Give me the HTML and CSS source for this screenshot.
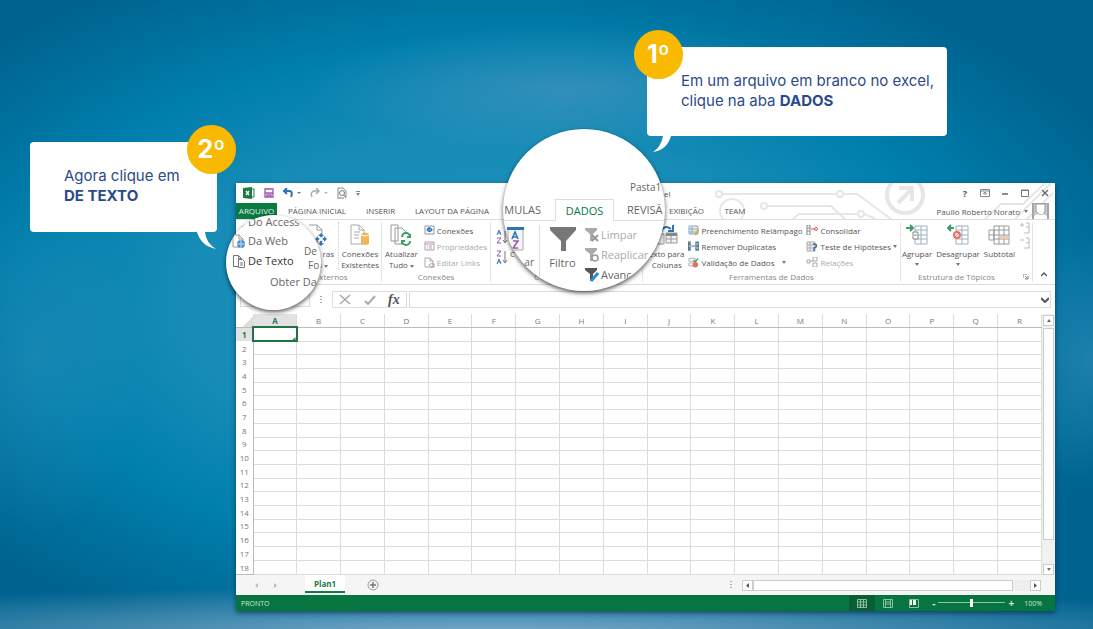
FILE: index.html
```html
<!DOCTYPE html>
<html lang="pt-BR">
<head>
<meta charset="utf-8">
<title>Importar dados de texto no Excel</title>
<link rel="stylesheet" href="styles.css">
</head>
<body>
<svg class="defs" aria-hidden="true">
  <symbol id="funnel" viewBox="0 0 26 26"><path d="M0 1h26v3L16 15v10h-5V15L0 4z"/></symbol>
  <symbol id="down" viewBox="0 0 4 3"><path d="M0 0h4L2 3z" fill="#777"/></symbol>
</svg>
<main class="stage">
  <section class="window">
    <svg class="circuit" viewBox="0 0 340 36" fill="none" stroke="#e6e6e6" stroke-width="2" aria-hidden="true">
      <circle cx="4" cy="11" r="3"/><path d="M7 11h115M128 11h14l34 25"/><circle cx="125" cy="11" r="3"/>
      <circle cx="17" cy="28" r="12"/><circle cx="49" cy="23" r="3"/><path d="M52 23h64l14 13M78 36l6-5h58M149 31l12 5"/><circle cx="146" cy="31" r="3"/>
      <circle cx="190" cy="12" r="18" stroke-width="4"/><path d="M183 20l14-14M184 5h13v13" stroke-width="4"/>
      <path d="M270 36l16-15h22l22-21M300 36l36-36M312 36l26-26"/>
    </svg>
    <header class="titlebar">
      <div class="quick">
        <svg width="12" height="12" viewBox="0 0 12 12"><path d="M7 2h4v8H7" fill="#fff" stroke="#1b7d45"/><path fill="#1b7d45" d="M0 1l9-1v12l-9-1z"/><path d="M3 4l3 4M6 4L3 8" stroke="#fff" stroke-width="1.3"/></svg>
        <svg width="10" height="10" viewBox="0 0 10 10"><path d="M1 1h8v8H1zM1 5h8M3 9V7h4v2" fill="#fff" stroke="#9b55ab" stroke-width="1.3"/></svg>
        <svg width="18" height="10" viewBox="0 0 18 10"><path d="M1 3h6q3 1 1 6M4 0L1 3l3 3" fill="none" stroke="#2e74b5" stroke-width="2"/><path d="M14 4h4l-2 2z" fill="#777"/></svg>
        <svg width="18" height="10" viewBox="0 0 18 10"><path d="M9 3H4q-4 1-2 6M6 0l3 3-3 3" fill="none" stroke="#aaa" stroke-width="1.5"/><path d="M14 4h4l-2 2z" fill="#bbb"/></svg>
        <svg width="10" height="12" viewBox="0 0 10 12"><path d="M1 10V1h5l3 3v6" fill="none" stroke="#888"/><circle cx="5" cy="6" r="2.5" fill="#fff" stroke="#777"/><path d="M7 8l2 3M0 11h7" stroke="#777"/></svg>
        <svg width="4" height="5" viewBox="0 0 4 5"><path d="M0 0h4v1H0zM0 2h4L2 5z" fill="#888"/></svg>
      </div>
      <span class="doc">el</span>
      <div class="controls">
        <button aria-label="Ajuda">?</button>
        <button aria-label="Opções da faixa"><svg width="10" height="8" viewBox="0 0 10 8"><path d="M.5.500h9v7h-9zM0 2h10M5 6V3M3 5l2-2 2 2" fill="none" stroke="#888"/></svg></button>
        <button aria-label="Minimizar"><svg width="8" height="8" viewBox="0 0 8 8"><path d="M1 5h6" stroke="#666" stroke-width="1.5"/></svg></button>
        <button aria-label="Maximizar"><svg width="8" height="8" viewBox="0 0 8 8"><path d="M.5 1h7v6.500h-7zM0 1.500h8" fill="none" stroke="#777"/></svg></button>
        <button aria-label="Fechar"><svg width="8" height="8" viewBox="0 0 8 8"><path d="M1 1l6 6M7 1L1 7" stroke="#666" stroke-width="1.4"/></svg></button>
      </div>
    </header>
    <nav class="tabs">
      <button class="file">ARQUIVO</button><button>PÁGINA INICIAL</button><button>INSERIR</button><button>LAYOUT DA PÁGINA</button><span></span><button>EXIBIÇÃO</button><button>TEAM</button>
      <div class="user"><span>Paullo Roberto Norato</span><svg width="4" height="3"><use href="#down"/></svg>
        <svg width="17" height="16" viewBox="0 0 17 16"><path d="M0 0h17v16H0z" fill="#a5a5a5"/><path d="M2 1h13v15H2z" fill="#ccc"/><path d="M4 1h9v7q-1 4-4 4t-5-4z" fill="#fff" stroke="#999"/><path d="M2 16v-3l4-2q3 2 5 0l4 2v3z" fill="#fff"/></svg></div>
    </nav>
    <section class="ribbon">
      <div class="group">
        <div class="tools end">
          <button class="big cut"><svg width="20" height="22" viewBox="0 0 20 22"><path d="M1 1h8l5 5v12H1M9 1v5h5" fill="#fff" stroke="#999"/><path d="M13 11v9M8 15h10" stroke="#3677b5" stroke-width="2"/><path d="M13 9l-3 3h6zM13 22l-3-3h6zM7 15l3-3v6zM19 15l-3-3v6z" fill="#3677b5"/><circle cx="13" cy="15" r="2" fill="#fff"/></svg><span>ras</span><span>s <svg width="4" height="3"><use href="#down"/></svg></span></button>
          <button class="big rule"><svg width="20" height="22" viewBox="0 0 20 22"><path d="M1 1h8l5 5v14H1zM9 1v5h5M4 8h6M4 11h5M4 14h5" fill="#fff" stroke="#aaa"/><path d="M11 10q4-3 8 0v10q-4 2-8 0z" fill="#f2b65a"/><path d="M11 11q4 2 8 0" stroke="#fff" fill="none"/></svg><span>Conexões</span><span>Existentes</span></button>
        </div>
        <div class="label externos">xternos</div>
      </div>
      <div class="group">
        <div class="tools">
          <button class="big"><svg width="22" height="22" viewBox="0 0 22 22"><path d="M1 1h7v16H1zM5 4h7l4 4v12H5z" fill="#fff" stroke="#999"/><circle cx="16" cy="15" r="6" fill="#fff"/><path d="M20 13a4 4 0 0 0-8 0M12 17a4 4 0 0 0 8 0M20 10v3h-3M12 20v-3h3" fill="none" stroke="#3c9c68" stroke-width="2"/></svg><span>Atualizar</span><span>Tudo <svg width="4" height="3"><use href="#down"/></svg></span></button>
          <div class="list">
            <button><svg width="11" height="10" viewBox="0 0 11 10"><path d="M1 1h9v8H1z" fill="#fff" stroke="#89a"/><path d="M3 5q2-4 5 0-3 3-5 0M5 7V2" stroke="#2e74b5" fill="none" stroke-width="1.3"/></svg>Conexões</button>
            <button class="off"><svg width="11" height="10" viewBox="0 0 11 10"><path d="M1 1h9v8H1zM1 3h9M3 5h1M5 5h3M3 7h1M5 7h3" fill="#fff" stroke="#b59bb2"/></svg>Propriedades</button>
            <button class="off"><svg width="11" height="11" viewBox="0 0 11 11"><path d="M1 1h5l3 3v6H1zM6 1v3h3" fill="#fff" stroke="#aaa"/><path d="M5 9q0-3 5-2v3H6" fill="none" stroke="#b58cae"/></svg>Editar Links</button>
          </div>
        </div>
        <div class="label">Conexões</div>
      </div>
      <div class="group">
        <div class="tools sort">
          <svg width="12" height="34" viewBox="0 0 12 34"><g fill="none" stroke="#3677b5"><path d="M1 5l2-5 2 5M2 3h3M1 34l2-5 2 5M2 32h3"/><path d="M1 8h4l-4 5h4M1 21h4l-4 5h4" stroke="#9b55ab"/><path d="M9 1v12M7 10l2 3 2-3M9 21v12M7 30l2 3 2-3" stroke="#777"/></g></svg>
          <button class="big low"><span>C</span></button>
        </div>
        <div class="label classify">C</div>
      </div>
      <div class="group">
        <div class="tools data">
          <button class="big"><svg width="24" height="22" viewBox="0 0 24 22"><path d="M2 10h7v10H2zM11 9h11v10H11zM11 15h11M16 9v10" fill="#eef3f8" stroke="#999"/><path d="M11 9h11v3H11z" fill="#888"/><path d="M6 8q3-8 10-3M13 7h5V1" fill="none" stroke="#2e74b5" stroke-width="2"/></svg><span>exto para</span><span>Colunas</span></button>
          <div class="list wide">
            <button><svg width="11" height="11" viewBox="0 0 11 11"><path d="M1 1h9v8H1zM1 4h9M1 7h9M4 1v8" fill="#e7f1ea" stroke="#8aa8bb"/><path d="M7 10l4-6" stroke="#d8ac45" stroke-width="2"/></svg>Preenchimento Relâmpago</button>
            <button><svg width="11" height="11" viewBox="0 0 12 11"><path d="M0 0h3v10H0zM8 0h4v10H8z" fill="#678"/><path d="M1 4h2v2H1zM9 2h2v2H9zM9 6h2v2H9z" fill="#8cf"/><path d="M3 5h5" stroke="#2e74b5"/></svg>Remover Duplicatas</button>
            <button><svg width="11" height="11" viewBox="0 0 12 11"><path d="M1 1h7v3H1zM1 6h7v3H1z" fill="#fff" stroke="#aaa"/><path d="M6 3l2 2 3-4" stroke="#3c9c68" stroke-width="1.5" fill="none"/><circle cx="8" cy="8" r="3" fill="#e8705a"/></svg>Validação de Dados <svg class="far" width="4" height="3"><use href="#down"/></svg></button>
          </div>
          <div class="list">
            <button><svg width="12" height="10" viewBox="0 0 12 10"><path d="M1 0h3v10H1zM1 3h3M1 6h3" fill="#fff" stroke="#888"/><path d="M5 4h5" stroke="#d9534f"/><circle cx="10" cy="4" r="1.5" fill="#fff" stroke="#d9534f"/></svg>Consolidar</button>
            <button><svg width="12" height="11" viewBox="0 0 12 11"><path d="M1 1h8v9H1zM1 4h8M1 7h8M4 1v9" fill="#fbeee6" stroke="#aaa"/><path d="M7 3q5 0 3 3l-2 1v3" fill="none" stroke="#2e74b5" stroke-width="1.5"/></svg>Teste de Hipóteses <svg width="4" height="3"><use href="#down"/></svg></button>
            <button class="off"><svg width="12" height="10" viewBox="0 0 12 10"><path d="M1 3h3v3H1zM7 0h4v4H7zM7 6h4v4H7zM4 4h3" fill="#fff" stroke="#aaa"/></svg>Relações</button>
          </div>
        </div>
        <div class="label">Ferramentas de Dados</div>
      </div>
      <div class="group">
        <div class="tools outline">
          <button class="big"><svg width="22" height="22" viewBox="0 0 22 22"><path d="M9 2h12v18H9zM9 6h12M9 11h12M9 15h12M15 2v18" fill="#fff" stroke="#9db0c2"/><path d="M7 8h5v7H7zM8 11h3" fill="#fff" stroke="#888"/><path d="M0 4h6M4 1l3 3-3 3" stroke="#3c9c68" fill="none" stroke-width="2"/></svg><span>Agrupar</span><svg width="4" height="3"><use href="#down"/></svg></button>
          <button class="big"><svg width="22" height="22" viewBox="0 0 22 22"><path d="M9 2h12v18H9zM9 6h12M9 11h12M9 15h12M15 2v18" fill="#fff" stroke="#9db0c2"/><circle cx="10" cy="11" r="3" fill="#fff" stroke="#e8705a" stroke-width="2"/><path d="M8 13l4-4" stroke="#e8705a"/><path d="M1 4h6M4 1L1 4l3 3" stroke="#3c9c68" fill="none" stroke-width="2"/></svg><span>Desagrupar</span><svg width="4" height="3"><use href="#down"/></svg></button>
          <button class="big"><svg width="22" height="22" viewBox="0 0 22 22"><path d="M6 2h15v18H6zM6 6h15M6 11h15M6 15h15M11 2v18M16 2v18M1 6h5v10H1zM1 11h5" fill="#fff" stroke="#999"/><path d="M12 12h9v3h-9z" fill="#f2c7b3"/></svg><span>Subtotal</span></button>
          <svg width="12" height="28" viewBox="0 0 12 28" fill="none" stroke="#bbb"><path d="M1 3h4M3 1v4M7 1h3v10H5M7 5h3M1 18h4M7 16h3v10H5M7 21h3"/></svg>
        </div>
        <div class="label corner">Estrutura de Tópicos <svg width="6" height="6" viewBox="0 0 6 6"><path d="M0 4V0h4M2 2l3 3M5 2v3H2" fill="none" stroke="#888"/></svg></div>
      </div>
      <button class="collapse" aria-label="Recolher"><svg width="6" height="5" viewBox="0 0 6 5"><path d="M0 4l3-3 3 3" fill="none" stroke="#555" stroke-width="1.4"/></svg></button>
    </section>
    <section class="formula">
      <input class="namebox" aria-label="Caixa de nome">
      <svg width="2" height="8" viewBox="0 0 2 8"><path d="M0 0h2v1H0zM0 3h2v1H0zM0 6h2v1H0z" fill="#aaa"/></svg>
      <div class="fx">
        <svg width="12" height="11" viewBox="0 0 12 11"><path d="M1 1l10 9M11 1L1 10" stroke="#aaa" stroke-width="1.6"/></svg>
        <svg width="12" height="10" viewBox="0 0 12 10"><path d="M1 6l3 3 7-8" fill="none" stroke="#aaa" stroke-width="2"/></svg>
        <i>fx</i>
      </div>
      <div class="entry"><input aria-label="Fórmula"><svg width="8" height="6" viewBox="0 0 8 6"><path d="M0 1l4 4 4-4" fill="none" stroke="#555" stroke-width="2"/></svg></div>
    </section>
    <section class="sheet">
      <table id="cells"></table>
      <div class="vscroll"><span class="arrow"><svg width="4" height="3" viewBox="0 0 4 3"><path d="M0 3h4L2 0z" fill="#666"/></svg></span><span class="thumb"></span><span class="arrow"><svg width="4" height="3"><use href="#down"/></svg></span></div>
    </section>
    <section class="sheetbar">
      <svg width="24" height="5" viewBox="0 0 24 5"><path d="M4 0L1 2.500l3 2.500zM20 0l3 2.500-3 2.500z" fill="#bbb"/></svg>
      <button class="plan">Plan1</button>
      <button class="add" aria-label="Nova planilha"><svg width="12" height="12" viewBox="0 0 12 12"><circle cx="6" cy="6" r="5" fill="none" stroke="#999"/><path d="M6 3v6M3 6h6" stroke="#777" stroke-width="1.5"/></svg></button>
      <svg class="split" width="2" height="8" viewBox="0 0 2 8"><path d="M0 0h2v1H0zM0 3h2v1H0zM0 6h2v1H0z" fill="#aaa"/></svg>
      <div class="hscroll"><span class="arrow"><svg width="4" height="5" viewBox="0 0 4 5"><path d="M4 0v5L1 2.500z" fill="#555"/></svg></span><span class="thumb"></span><span class="arrow"><svg width="4" height="5" viewBox="0 0 4 5"><path d="M0 0v5l3-2.500z" fill="#555"/></svg></span></div>
    </section>
    <footer class="status">
      <span>PRONTO</span>
      <div class="views">
        <button class="on" aria-label="Normal"><svg width="10" height="9" viewBox="0 0 10 9"><path d="M.5.500h9v8h-9zM0 3h10M0 6h10M3.500 0v9M6.500 0v9" fill="none" stroke="#8cc0a2"/></svg></button>
        <button aria-label="Layout da página"><svg width="10" height="9" viewBox="0 0 10 9"><path d="M.5.500h9v8h-9zM2.500 0v9M7.500 0v9M3 3h4M3 5h4" fill="none" stroke="#8cc0a2"/></svg></button>
        <button aria-label="Quebra de página"><svg width="10" height="9" viewBox="0 0 10 9"><path d="M.5.500h9v8h-9z" fill="none" stroke="#8cc0a2"/><path d="M1 1h2v5H1zM4 1h3v5H4z" fill="#fff"/></svg></button>
      </div>
      <div class="zoom"><span>-</span><svg width="67" height="8" viewBox="0 0 67 8"><path d="M0 3.500h67" stroke="#8fc4a5"/><path d="M32 0h3v8h-3z" fill="#fff"/></svg><span>+</span></div>
      <span>100%</span>
    </footer>
  </section>

  <section class="lens source">
    <div><svg width="10" height="11" viewBox="0 0 10 11"><path d="M3 7l4-2v5H3z" fill="#c94a4a"/></svg>Do Access</div>
    <div><svg width="14" height="14" viewBox="0 0 14 14"><path d="M1 1h6l4 4v8H1zM7 1v4h4" fill="#fff" stroke="#999"/><circle cx="9" cy="10" r="4" fill="#4f90c5"/><path d="M5 10h8M9 6v8" stroke="#bfe0f5"/></svg>Da Web</div>
    <div class="sharp"><svg width="14" height="14" viewBox="0 0 14 14"><path d="M6 12.500H1.500v-11h5l3 3M6.500 1.500v3h3" fill="#fff" stroke="#777"/><path d="M6.500 5.500h4l2 2v6h-6zM8 9h3M8 11h3" fill="#fff" stroke="#777"/></svg>De Texto</div>
    <p>Obter Dad</p>
    <div class="others"><span>De</span><span>Fo</span></div>
  </section>

  <section class="lens data-tab">
    <div class="book">Pasta1</div>
    <div class="lens-tabs"><span class="left">MULAS</span><button>DADOS</button><span class="right">REVISÃ</span></div>
    <div class="lens-ribbon">
      <div class="az"><svg width="18" height="24" viewBox="0 0 18 24"><path d="M1 1h15v22H1z" fill="#f5f5f5" stroke="#aaa"/><path d="M0 0h17v3H0z" fill="#2e74b5"/><path d="M5 12l3-7 3 7M6 10h4" fill="none" stroke="#2e74b5" stroke-width="1.5"/><path d="M6 14h5l-5 7h5" fill="none" stroke="#9b55ab" stroke-width="1.5"/></svg><span>ar</span></div>
      <div class="filter"><svg width="26" height="26" fill="#777"><use href="#funnel"/></svg><span>Filtro</span></div>
      <div class="filters">
        <span class="dim"><svg width="14" height="14" viewBox="0 0 14 14"><path d="M0 0h12v2L8 6v7H5V6L0 2z" fill="#aaa"/><path d="M7 7l6 6M13 7l-6 6" stroke="#999" stroke-width="2"/></svg>Limpar</span>
        <span class="dim"><svg width="14" height="14" viewBox="0 0 14 14"><path d="M0 0h12v2L8 6v7H5V6L0 2z" fill="#aaa"/><circle cx="10" cy="10" r="3" fill="#fff" stroke="#999" stroke-width="1.500"/></svg>Reaplicar</span>
        <span><svg width="14" height="14" viewBox="0 0 14 14"><path d="M0 0h12v2L8 6v7H5V6L0 2z" fill="#555"/><path d="M6 13l7-8" stroke="#2e8bd5" stroke-width="3"/></svg>Avanç</span>
      </div>
    </div>
  </section>

  <article class="callout first">
    <p>Em um arquivo em branco no excel,<br>clique na aba <b>DADOS</b></p>
    <strong class="badge">1º</strong>
    <svg class="tail" width="20" height="18" viewBox="0 0 20 18"><path d="M11 0q-2 11-10 16Q15 14 19 0z" fill="#fff"/></svg>
  </article>
  <article class="callout second">
    <p>Agora clique em<br><b>DE TEXTO</b></p>
    <strong class="badge">2º</strong>
    <svg class="tail" width="20" height="18" viewBox="0 0 20 18"><path d="M0 0q4 14 19 17Q9 11 8 0z" fill="#fff"/></svg>
  </article>
</main>
<script src="script.js"></script>
</body>
</html>
```

FILE: styles.css
```css
* { box-sizing: border-box; }
body { margin: 0; font-family: "Open Sans", "Noto Sans", sans-serif; font-size: 8px; font-weight: 500; line-height: 11px; color: #555; }
button, input { font: inherit; color: inherit; border: 0; background: none; padding: 0; margin: 0; }
svg { flex: none; }
p { margin: 0; }
.defs { position: absolute; width: 0; height: 0; }

.stage {
  position: relative;
  min-height: 100vh;
  display: flex;
  padding: 183px 38px 18px 236px;
  background:
    radial-gradient(ellipse 75% 8% at 45% 101%, #7fabc9, transparent),
    radial-gradient(ellipse 24% 10% at 52% 14%, rgba(90, 155, 195, .5), transparent),
    radial-gradient(ellipse 10% 28% at 3% 57%, rgba(70, 150, 190, .3), transparent),
    radial-gradient(ellipse 8% 20% at 100% 57%, rgba(50, 140, 185, .6), transparent),
    radial-gradient(ellipse 62% 58% at 45% 48%, #1b90bb 0, #178cb7 45%, #007fad 70%, #006490 100%);
}

.window { position: relative; flex: 1; min-width: 0; display: flex; flex-direction: column; background: #fff; box-shadow: 0 2px 5px rgba(0, 30, 60, .6); }
.circuit { position: absolute; top: 0; right: 0; width: 340px; height: 36px; }
.titlebar, .tabs { position: relative; }

.titlebar { height: 20px; display: flex; align-items: center; padding: 0 5px 0 7px; }
.quick { display: flex; align-items: center; gap: 9px; }
.doc { margin-left: 304px; }
.controls { margin-left: auto; display: flex; }
.controls button { width: 20px; height: 20px; display: grid; place-items: center; font-weight: 700; font-size: 9px; }
.controls button:last-child { width: 11px; margin-left: 4px; }

.tabs { height: 17px; display: grid; grid-template-columns: 41fr 80fr 47fr 96fr 160fr 53fr 44fr 298fr; border-bottom: 1px solid #ddd; }
.tabs button { white-space: nowrap; padding-bottom: 1px; }
.tabs .file { background: #087a42; color: #e5f3ea; }
.user { display: flex; justify-content: flex-end; align-items: center; gap: 4px; padding-right: 6px; }

.ribbon { height: 65px; display: grid; grid-template-columns: 146fr 109fr 152fr 258fr 132fr 22fr; border-bottom: 1px solid #ddd; }
.group { min-width: 0; display: flex; flex-direction: column; justify-content: space-between; margin: 2px 0; border-right: 1px solid #e5e5e5; }
.tools { height: 48px; display: flex; justify-content: center; align-items: flex-start; gap: 6px; }
.tools.end { justify-content: flex-end; gap: 4px; }
.big { flex: none; display: flex; flex-direction: column; align-items: center; white-space: nowrap; }
.big > svg:first-child { margin: 2px 0; }
.big > svg:last-child { margin-top: 4px; }
.big.cut { align-items: flex-end; }
.big.cut svg:first-child { margin-right: 6px; }
.big.rule { border-left: 1px dotted #ccc; padding: 0 2px; }
.big.low { padding-top: 26px; }
.label { text-align: center; white-space: nowrap; color: #888; }
.label.externos { padding-left: 50px; }
.label.classify { text-align: left; padding-left: 43px; }
.list { display: grid; grid-template-rows: repeat(3, 16px); }
.list button { display: flex; align-items: center; gap: 2px; white-space: nowrap; text-align: left; }
.list.wide { width: 116px; }
.list .far { margin-left: 6px; }
.off { color: #aaa; }
.sort { justify-content: flex-start; padding-left: 5px; gap: 2px; }
.sort > svg { margin-top: 8px; }
.data { justify-content: flex-start; padding-left: 6px; gap: 4px; }
.data .wide { margin-right: -2px; }
.outline { gap: 4px; }
.corner svg { margin-left: 26px; }
.corner { text-align: right; padding-right: 3px; }
.collapse { align-self: end; padding: 5px 0; }

.formula { height: 17px; margin: 6px 4px; display: flex; align-items: center; gap: 2px; }
.formula > svg { margin: 0 8px; }
.namebox { width: 70px; height: 15px; border: 1px solid #ddd; }
.fx { width: 75px; height: 17px; display: flex; align-items: center; justify-content: space-around; border: 1px solid #ddd; }
.fx i { font: italic 700 14px "Liberation Serif", serif; }
.entry { flex: 1; height: 17px; display: flex; align-items: center; padding-right: 1px; border: 1px solid #ddd; }
.entry input { flex: 1; min-width: 0; height: 13px; }

.sheet { flex: 1; display: grid; grid-template-columns: 1fr 13px; }
.sheet table { width: 100%; height: 100%; border-collapse: collapse; table-layout: fixed; border-bottom: 1px solid #bbb; }
.sheet th, .sheet td { padding: 0; font-weight: 500; line-height: 11px; color: #777; text-align: center; overflow: hidden; }
.sheet th:first-child { width: 17px; }
.sheet thead th { height: 13px; border-right: 1px solid #ddd; border-bottom: 1px solid #bbb; }
.sheet thead th:first-child { background: linear-gradient(135deg, #fff 65%, #ddd 65%); }
.sheet tbody th { border-right: 1px solid #bbb; }
.sheet td { border: 1px solid #ddd; }
.sheet .hot { background: #e2e2e2; color: #147a47; font-weight: 700; }
.sheet td.active { border: 0; outline: 2px solid #217346; outline-offset: -1px; background: linear-gradient(135deg, #fff 94%, #217346 94%); }
.vscroll { display: flex; flex-direction: column; padding: 1px 1px 0; background: #f1f1f1; }
.arrow { flex: none; width: 11px; height: 11px; display: grid; place-items: center; background: #fff; border: 1px solid #ccc; }
.vscroll .thumb { flex: 1; margin: 2px 0 24px; background: #fff; border: 1px solid #ccc; }

.sheetbar { height: 20px; display: flex; align-items: center; padding: 0 14px 0 18px; background: #f5f5f5; }
.plan { width: 40px; align-self: stretch; margin: 0 22px 2px 27px; background: #fff; color: #147a47; font-weight: 700; border-bottom: 2px solid #147a47; }
.add { display: grid; }
.split { margin: 0 10px 0 auto; }
.hscroll { width: 38%; height: 11px; display: flex; background: #eee; }
.hscroll .thumb { flex: 1; margin-right: 17px; background: #fff; border: 1px solid #ccc; }

.status { height: 16px; display: flex; align-items: center; padding: 0 13px 0 5px; background: #077540; color: #cfe6d9; font-size: 7px; }
.views { display: flex; align-self: stretch; margin-left: auto; }
.views button { width: 26px; display: grid; place-items: center; }
.views .on { background: #075f33; }
.zoom { display: flex; align-items: center; gap: 3px; margin: 0 10px 0 5px; font-size: 10px; font-weight: 700; }

.lens { position: absolute; overflow: hidden; border-radius: 50%; background: #fff; box-shadow: 0 2px 4px rgba(0, 0, 0, .65); color: #666; font-size: 11px; line-height: 14px; white-space: nowrap; }

.source { left: 226px; top: 215px; width: 95px; height: 95px; padding-left: 6px; }
.source div { display: flex; align-items: center; gap: 2px; height: 20px; }
.source div:first-child { height: 16px; padding: 0 0 2px 4px; }
.source .sharp { color: #333; }
.source p { margin: 4px 0 0 38px; }
.source .others { position: absolute; left: 78px; top: 29px; height: auto; display: block; }
.source .others span { display: block; font-size: 10px; }
.source .others span:last-child { padding-left: 4px; }

.data-tab { left: 503px; top: 129px; width: 162px; height: 162px; display: flex; flex-direction: column; }
.book { height: 70px; padding: 51px 0 0 127px; font-size: 10px; }
.lens-tabs { height: 22px; display: grid; grid-template-columns: 52px 59px 1fr; border-bottom: 1px solid #ddd; line-height: 22px; }
.lens-tabs .left { justify-self: end; padding-right: 14px; }
.lens-tabs .right { padding-left: 13px; }
.lens-tabs button { height: 22px; background: #fff; border: 1px solid #ddd; border-bottom: 0; color: #087a42; }
.lens-ribbon { flex: 1; display: grid; grid-template-columns: 37px 42px 1fr; padding-top: 4px; }
.lens-ribbon div { display: flex; flex-direction: column; }
.lens-ribbon .az { border-right: 1px solid #ddd; align-items: flex-start; padding: 2px 0 0 4px; }
.az span { align-self: flex-end; padding: 4px 5px 0 0; font-size: 10px; }
.filter { align-items: center; gap: 4px; padding: 1px 0 0 3px; }
.filters { padding-left: 3px; }
.filters span { height: 20px; display: flex; align-items: center; gap: 2px; }
.filters .dim { color: #aaa; }

.callout { position: absolute; background: #fff; border-radius: 4px; color: #2b4a8b; font: 15px/20px Inter, "Open Sans", sans-serif; }
.callout b { font-weight: 700; }
.first { left: 647px; top: 47px; width: 300px; height: 89px; padding: 24px 0 0 34px; white-space: nowrap; }
.second { left: 30px; top: 142px; width: 187px; height: 90px; padding: 24px 0 0 34px; }
.badge { position: absolute; width: 49px; height: 49px; border-radius: 50%; background: #f8b900; color: #fff; font: 700 25px/49px Inter, "Open Sans", sans-serif; text-align: center; }
.first .badge { left: -13px; top: -17px; }
.second .badge { right: -19px; top: -17px; }
.tail { position: absolute; top: 100%; }
.first .tail { left: 5px; }
.second .tail { right: 0; }
```

FILE: script.js
```js
const table = document.getElementById("cells");
const letters = "ABCDEFGHIJKLMNOPQR".split("");
const head = table.createTHead().insertRow();
const addHeader = (row, text, hot) => {
  const th = document.createElement("th");
  th.textContent = text;
  if (hot) th.className = "hot";
  row.append(th);
};
addHeader(head, "", false);
letters.forEach((letter, i) => addHeader(head, letter, i === 0));
const body = table.createTBody();
for (let r = 1; r <= 18; r++) {
  const row = body.insertRow();
  addHeader(row, r, r === 1);
  letters.forEach((_, i) => {
    const cell = row.insertCell();
    if (r === 1 && i === 0) cell.className = "active";
  });
}
```
